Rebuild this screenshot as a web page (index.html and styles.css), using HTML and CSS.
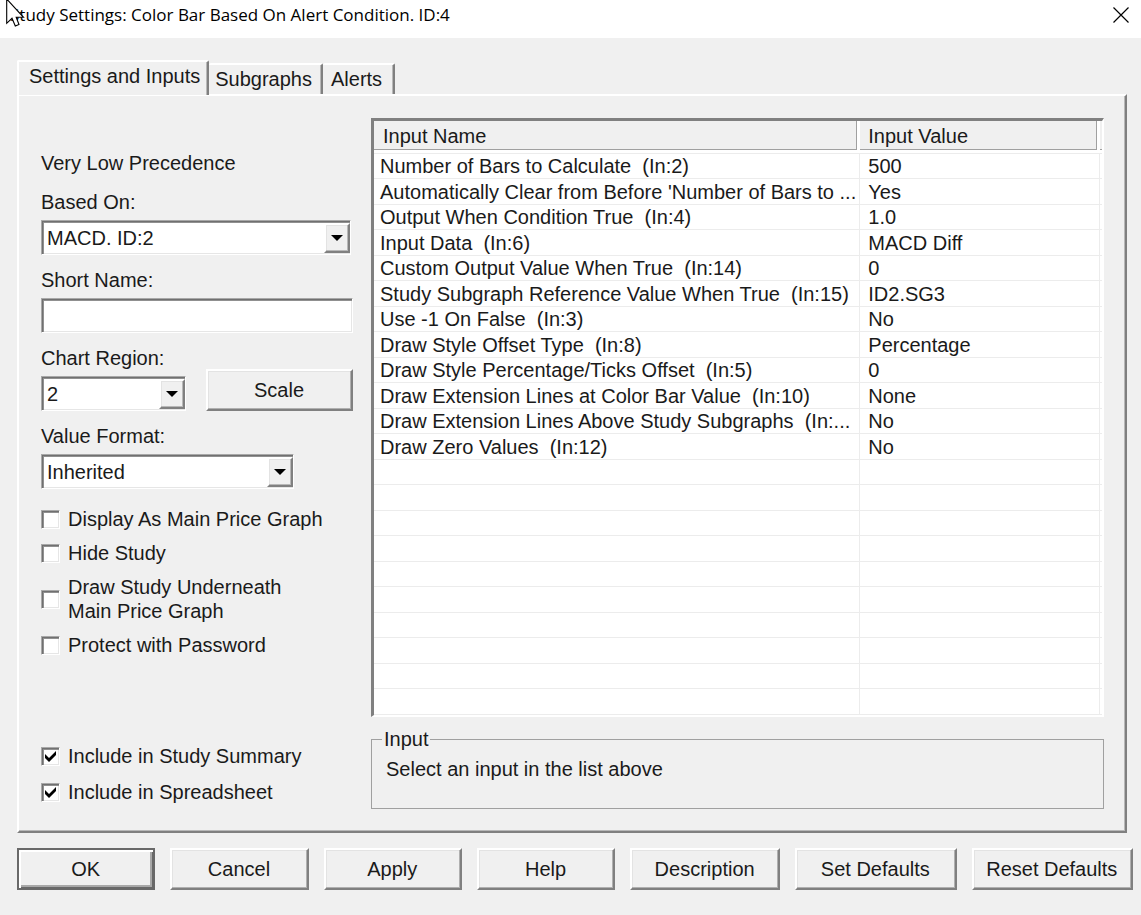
FILE: index.html
```html
<!DOCTYPE html>
<html lang="en">
<head>
<meta charset="utf-8">
<title>Study Settings</title>
<link rel="stylesheet" href="styles.css">
</head>
<body>
<header class="titlebar">
  <h1 class="title">Study Settings: Color Bar Based On Alert Condition. ID:4</h1>
  <button class="close" type="button" aria-label="Close">
    <svg width="16" height="16" viewBox="0 0 16 16"><path d="M.5 .5L15.5 15.5M15.5 .5L.5 15.5" stroke="#000" stroke-width="1.2" fill="none"/></svg>
  </button>
  <svg class="cursor" width="20" height="28" viewBox="0 0 20 28"><path d="M.7-1V23.3L6 18.3L9.3 26L13 24.5L10.2 17.3H17.5Z" fill="#fff" stroke="#000" stroke-width="1.1"/></svg>
</header>
<main class="dialog">
  <div class="tabs" role="tablist">
    <button class="tab active" type="button" role="tab" aria-selected="true">Settings and Inputs</button>
    <button class="tab" type="button" role="tab">Subgraphs</button>
    <button class="tab last" type="button" role="tab">Alerts</button>
  </div>
  <section class="panel">
    <form class="options">
      <p class="precedence">Very Low Precedence</p>
      <div class="field">
        <label for="based">Based On:</label>
        <span class="combo"><select id="based" class="sunken"><option>MACD. ID:2</option></select><span class="drop"><svg width="12" height="6" viewBox="0 0 12 6"><path d="M0 0H12L6 6Z"/></svg></span></span>
      </div>
      <div class="field">
        <label for="short">Short Name:</label>
        <input id="short" class="sunken" type="text">
      </div>
      <div class="field">
        <label for="region">Chart Region:</label>
        <div class="region">
          <span class="combo small"><select id="region" class="sunken"><option>2</option></select><span class="drop"><svg width="12" height="6" viewBox="0 0 12 6"><path d="M0 0H12L6 6Z"/></svg></span></span>
          <button class="btn scale" type="button">Scale</button>
        </div>
      </div>
      <div class="field">
        <label for="format">Value Format:</label>
        <span class="combo medium"><select id="format" class="sunken"><option>Inherited</option></select><span class="drop"><svg width="12" height="6" viewBox="0 0 12 6"><path d="M0 0H12L6 6Z"/></svg></span></span>
      </div>
      <div class="checks">
        <label class="check"><span class="tick"><input type="checkbox"></span>Display As Main Price Graph</label>
        <label class="check"><span class="tick"><input type="checkbox"></span>Hide Study</label>
        <label class="check"><span class="tick"><input type="checkbox"></span><span>Draw Study Underneath<br>Main Price Graph</span></label>
        <label class="check"><span class="tick"><input type="checkbox"></span>Protect with Password</label>
      </div>
      <div class="checks summary">
        <label class="check"><span class="tick"><input type="checkbox" checked><svg width="11" height="11" viewBox="0 0 11 11"><path d="M0 3L4 7L11 0V4L4 11L0 7Z"/></svg></span>Include in Study Summary</label>
        <label class="check"><span class="tick"><input type="checkbox" checked><svg width="11" height="11" viewBox="0 0 11 11"><path d="M0 3L4 7L11 0V4L4 11L0 7Z"/></svg></span>Include in Spreadsheet</label>
      </div>
    </form>
    <div class="inputs">
      <div class="list">
        <table class="grid">
          <colgroup><col class="name-col"><col><col class="edge-col"></colgroup>
          <thead><tr><th><div class="head">Input Name</div></th><th><div class="head">Input Value</div></th><th><div class="head edge"></div></th></tr></thead>
          <tbody>
            <tr><td>Number of Bars to Calculate  (In:2)</td><td>500</td><td></td></tr>
            <tr><td>Automatically Clear from Before 'Number of Bars to ...</td><td>Yes</td><td></td></tr>
            <tr><td>Output When Condition True  (In:4)</td><td>1.0</td><td></td></tr>
            <tr><td>Input Data  (In:6)</td><td>MACD Diff</td><td></td></tr>
            <tr><td>Custom Output Value When True  (In:14)</td><td>0</td><td></td></tr>
            <tr><td>Study Subgraph Reference Value When True  (In:15)</td><td>ID2.SG3</td><td></td></tr>
            <tr><td>Use -1 On False  (In:3)</td><td>No</td><td></td></tr>
            <tr><td>Draw Style Offset Type  (In:8)</td><td>Percentage</td><td></td></tr>
            <tr><td>Draw Style Percentage/Ticks Offset  (In:5)</td><td>0</td><td></td></tr>
            <tr><td>Draw Extension Lines at Color Bar Value  (In:10)</td><td>None</td><td></td></tr>
            <tr><td>Draw Extension Lines Above Study Subgraphs  (In:...</td><td>No</td><td></td></tr>
            <tr><td>Draw Zero Values  (In:12)</td><td>No</td><td></td></tr>
            <tr><td></td><td></td><td></td></tr>
            <tr><td></td><td></td><td></td></tr>
            <tr><td></td><td></td><td></td></tr>
            <tr><td></td><td></td><td></td></tr>
            <tr><td></td><td></td><td></td></tr>
            <tr><td></td><td></td><td></td></tr>
            <tr><td></td><td></td><td></td></tr>
            <tr><td></td><td></td><td></td></tr>
            <tr><td></td><td></td><td></td></tr>
            <tr><td></td><td></td><td></td></tr>
          </tbody>
        </table>
      </div>
      <fieldset class="group">
        <legend>Input</legend>
        <p>Select an input in the list above</p>
      </fieldset>
    </div>
  </section>
  <footer class="actions">
    <button class="btn primary" type="button">OK</button>
    <button class="btn" type="button">Cancel</button>
    <button class="btn" type="button">Apply</button>
    <button class="btn" type="button">Help</button>
    <button class="btn wide" type="button">Description</button>
    <button class="btn wider" type="button">Set Defaults</button>
    <button class="btn wider" type="button">Reset Defaults</button>
  </footer>
</main>
</body>
</html>
```
FILE: styles.css
```css
* { box-sizing: border-box; }
body {
  margin: 0;
  min-height: 100vh;
  background: #f0f0f0;
  color: #1a1a1a;
  font: 20px/24px "Liberation Sans", Arial, sans-serif;
}
button, input, select { font: inherit; color: inherit; }
p { margin: 0; }

.titlebar {
  position: relative;
  display: flex;
  align-items: center;
  justify-content: space-between;
  height: 38px;
  padding: 0 12px 8px 10px;
  background: #fff;
}
.title {
  margin: 0;
  font: 17px/24px "Open Sans", "Noto Sans", sans-serif;
  color: #000;
}
.close {
  display: flex;
  padding: 0;
  border: 0;
  background: none;
}
.cursor { position: absolute; left: 6px; top: 0; }

.dialog { padding: 22px 8px 24px 17px; }

.tabs { display: flex; align-items: flex-end; height: 34px; }
.tab {
  height: 31px;
  padding: 0 9px 2px 6px;
  border: 2px solid;
  border-color: #fff #808080 #fff #fff;
  border-left-width: 0;
  border-bottom-width: 0;
  border-radius: 2px 2px 0 0;
  background: #f0f0f0;
  box-shadow: inset -1px 0 #b8b8b8;
}
.tab.active {
  z-index: 1;
  height: 35px;
  margin-bottom: -1px;
  padding: 0 7px 5px 10px;
  border-left-width: 2px;
}
.tab.last { padding-right: 11px; padding-left: 8px; }

.panel {
  display: flex;
  gap: 18px;
  margin-right: 6px;
  padding: 22px 21px 22px 22px;
  border: 2px solid;
  border-color: #fff #808080 #808080 #fff;
  box-shadow: inset -1px -1px #b8b8b8;
}
.options {
  display: flex;
  flex-direction: column;
  flex: 0 0 312px;
  padding: 33px 0 5px;
}
.precedence { margin-bottom: 15px; }
.field {
  display: flex;
  flex-direction: column;
  gap: 6px;
  margin-bottom: 13px;
}
.sunken,
.tick input {
  border: 1px solid;
  border-color: #a8a8a8 #fff #fff #a8a8a8;
  border-radius: 0;
  background: #fff;
  box-shadow: inset 1px 1px #707070, inset 2px 2px #909090, inset -1px -1px #e6e6e6;
  outline: 0;
  appearance: none;
}
.sunken {
  width: 100%;
  height: 35px;
  padding: 0 5px;
}
.combo { position: relative; display: flex; width: 310px; }
.combo.small { width: 145px; }
.combo.medium { width: 253px; }
.drop {
  position: absolute;
  top: 3px;
  right: 1px;
  bottom: 2px;
  display: flex;
  align-items: center;
  justify-content: center;
  width: 26px;
  border: 2px solid;
  border-color: #fff #808080 #808080 #fff;
  background: #f0f0f0;
  box-shadow: inset -1px -1px #b8b8b8, inset 1px 1px #e3e3e3;
  pointer-events: none;
}
.region { display: flex; align-items: flex-end; justify-content: space-between; height: 35px; }

.btn {
  height: 42px;
  padding: 0 1px 1px 0;
  border: 2px solid;
  border-color: #fff #808080 #808080 #fff;
  border-radius: 0;
  background: #f0f0f0;
  box-shadow: inset -1px -1px #b0b0b0, inset 1px 1px #e3e3e3;
  white-space: nowrap;
}
.scale { width: 147px; }

.checks { display: flex; flex-direction: column; gap: 10px; margin-top: 5px; }
.summary { gap: 12px; margin-top: auto; }
.check { display: flex; align-items: center; gap: 8px; }
.tick { position: relative; display: flex; }
.tick input {
  width: 19px;
  height: 19px;
  margin: 0;
}
.tick svg { position: absolute; left: 4px; top: 4px; pointer-events: none; }

.inputs { flex: 1; min-width: 0; }
.list {
  border: 2px solid;
  border-color: #808080 #fff #fff #808080;
  border-top-width: 3px;
  border-left-width: 3px;
  background: #fff;
}
.grid { width: 100%; border-spacing: 0; table-layout: fixed; }
.name-col { width: 66.8%; }
.edge-col { width: 2px; }
.grid th {
  height: 33px;
  padding: 0;
  border-bottom: 1px solid #ececec;
  font-weight: normal;
  text-align: left;
  vertical-align: top;
}
.head {
  height: 29px;
  margin-right: 3px;
  padding: 3px 8px 0 9px;
  border: 1px solid #a0a0a0;
  border-width: 0 1px 1px 0;
  background: #f0f0f0;
}
.head.edge { margin: 0; padding: 0; border-right: 0; }
.grid th:nth-child(2) .head { padding-left: 8px; }
.grid td {
  height: 25px;
  padding: 0 6px;
  border: 1px solid #ececec;
  border-width: 0 1px 1px 0;
  line-height: 24px;
  white-space: pre;
  overflow: hidden;
}
.grid tr:nth-child(even) td { height: 26px; }
.grid td:nth-child(2) { padding-left: 8px; }
.grid td:last-child { padding: 0; border-right: 0; }

.group {
  height: 82px;
  margin: 10px 0 0;
  padding: 6px 14px;
  border: 1px solid #a0a0a0;
}
.group legend { margin-left: -4px; padding: 0 2px; }

.actions { display: flex; gap: 15px; margin-top: 15px; }
.actions .btn { flex: 138 1 0; min-width: 0; }
.actions .wide { flex-grow: 150; }
.actions .wider { flex-grow: 162; }
.btn.primary {
  border: 2px solid #696969;
  box-shadow: inset 2px 2px #fff, inset -1px -1px #696969, inset -3px -3px #a8a8a8;
}
```
